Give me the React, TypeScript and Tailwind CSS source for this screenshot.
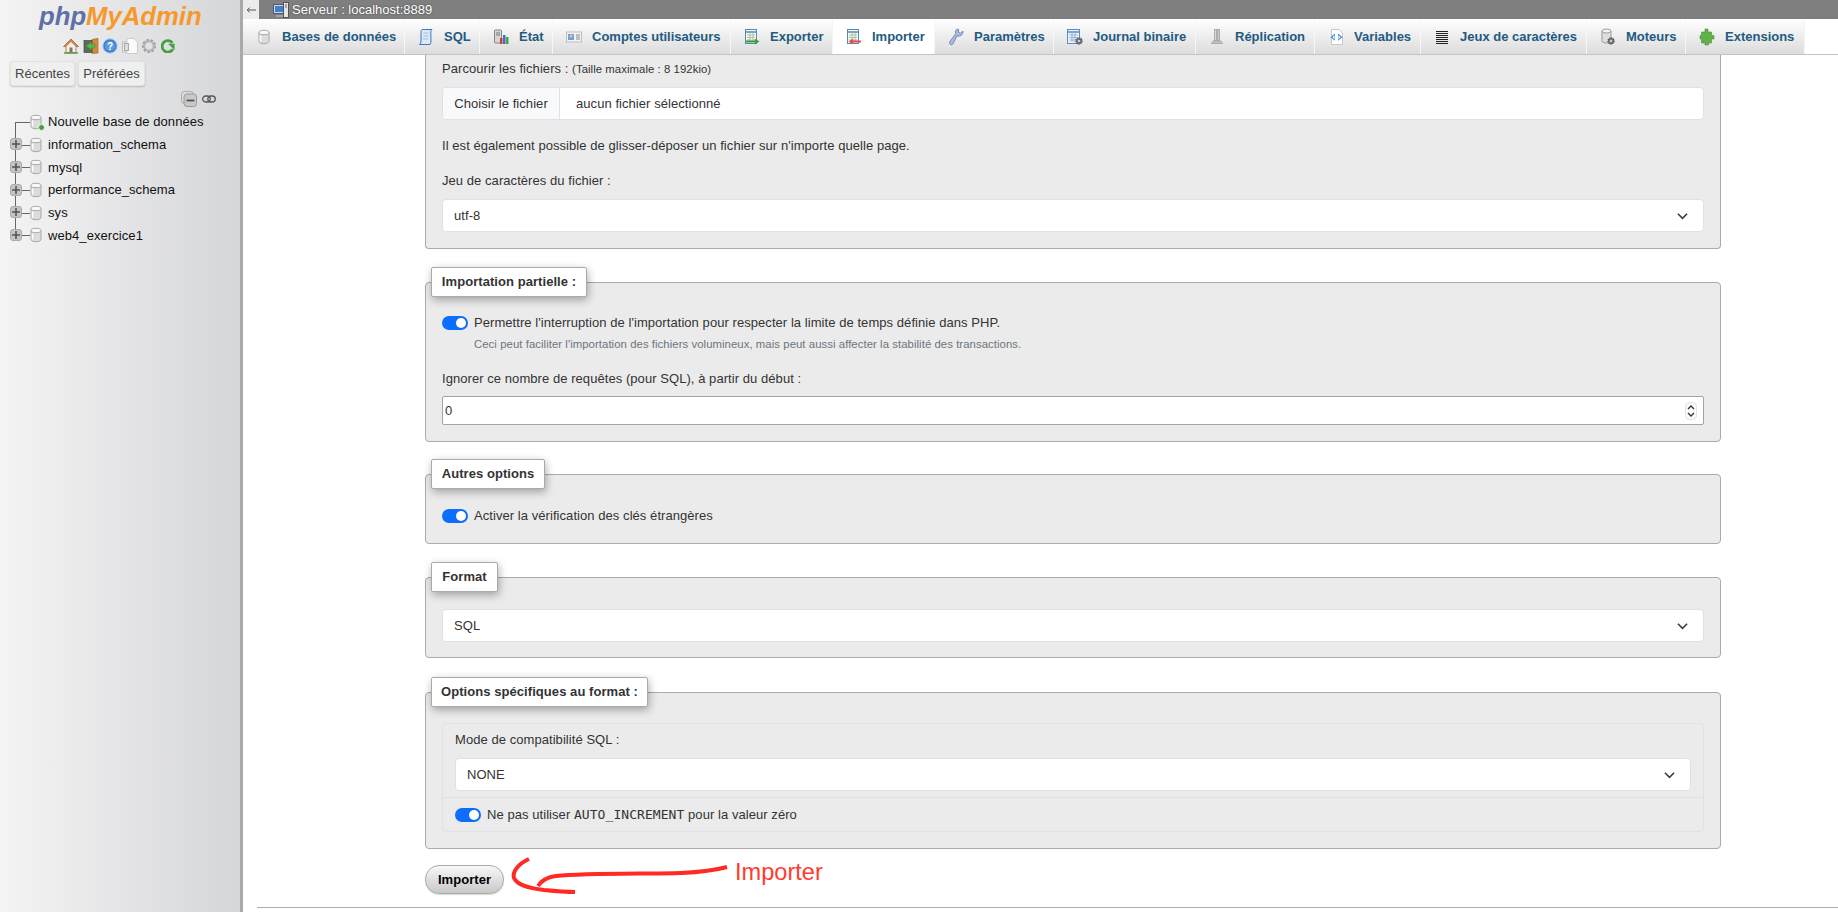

type IconProps = { className?: string };

const Db = ({ className = "w-4 h-4" }: IconProps) => (
  <svg viewBox="0 0 16 16" className={className}>
    <path d="M3 3.5v9c0 1.3 2.2 2.2 5 2.2s5-.9 5-2.2v-9z" fill="#dcdcdc" stroke="#a8a8a8" />
    <ellipse cx="8" cy="3.5" rx="5" ry="2.2" fill="#f8f8f8" stroke="#a8a8a8" />
    <path d="M4.5 6.5v6" stroke="#fff" strokeWidth="1.5" />
  </svg>
);

const SqlIcon = () => (
  <svg viewBox="0 0 16 18" className="w-4 h-[18px]">
    <path d="M4 1.5h10c-1.2 1-1.4 2-1.2 3.5l.2 8c.1 1.5-.2 2.5-1 3.5H1.5c1-.8 1.5-2 1.5-3.5L3 4c0-1.2.2-2 1-2.5z" fill="#dbe9f8" stroke="#3f77b8" />
    <path d="M5.5 5h5M5.5 8h5M5 11h5" stroke="#9dbfe4" />
  </svg>
);

const StatusIcon = () => (
  <svg viewBox="0 0 16 16" className="w-4 h-4">
    <rect x="1.5" y="1" width="7" height="13" rx="1" fill="#d5d5d5" stroke="#888" />
    <path d="M3 4h4M3 6h4" stroke="#777" />
    <rect x="7" y="9" width="2.5" height="6" fill="#d83a2e" />
    <rect x="10" y="6" width="2.5" height="9" fill="#3d70c9" />
    <rect x="13" y="8" width="2.5" height="7" fill="#4aa53c" />
  </svg>
);

const UsersIcon = () => (
  <svg viewBox="0 0 16 16" className="w-4 h-4">
    <rect x="0.5" y="3" width="15" height="10" fill="#f3f3f3" stroke="#bdbdbd" />
    <rect x="2" y="5" width="6" height="6" fill="#6aa4e0" />
    <circle cx="5" cy="7" r="1.6" fill="#eebf8d" />
    <path d="M10 6h4M10 8h4M10 10h4" stroke="#8a8a8a" />
  </svg>
);

const TableArrow = ({ color, stripe }: { color: string; stripe: string }) => (
  <svg viewBox="0 0 16 16" className="w-4 h-4">
    <rect x="1.5" y="0.5" width="11" height="14" fill="#f5f9f3" stroke="#5a86b8" />
    <path d="M1.5 3h11" stroke="#5a86b8" strokeWidth="1.5" />
    <path d="M3 6h8M3 8.5h8M3 11h8M6 4v9M9 4v9" stroke="#a9c4a0" />
    <path d={stripe} fill={color} />
  </svg>
);

const Wrench = () => (
  <svg viewBox="0 0 16 18" className="w-4 h-[18px]">
    <path d="M15 3.2l-2.6 2-2-1.2.3-2.7C9 .8 7.4 1.8 7.4 3.8c0 .8.2 1.3.4 1.8L2.2 13.2c-1 1.4-.7 2.7.2 3.3 1 .6 2 .2 2.8-1L8.8 8c2.7.6 6.6-.9 6.2-4.8z" fill="#a9bcd8" stroke="#5d78a6" strokeWidth="0.8" />
  </svg>
);

const LogIcon = () => (
  <svg viewBox="0 0 16 16" className="w-4 h-4">
    <rect x="0.5" y="0.5" width="12" height="14" fill="#e9f1fb" stroke="#5a8ccc" />
    <path d="M0.5 3h12" stroke="#5a8ccc" strokeWidth="1.5" />
    <path d="M2.5 6h8M2.5 8.5h8M2.5 11h8M5 4v9M8 4v9" stroke="#9cb4d0" />
    <circle cx="12" cy="12" r="3" fill="#777" stroke="#555" strokeWidth="1.4" strokeDasharray="1.2 0.8" />
    <circle cx="12" cy="12" r="1" fill="#eee" />
  </svg>
);

const ReplicationIcon = () => (
  <svg viewBox="0 0 16 16" className="w-4 h-4">
    <rect x="5.5" y="0.5" width="2" height="11" fill="#d8d8d8" stroke="#9a9a9a" strokeWidth="0.7" />
    <rect x="8.5" y="0.5" width="2" height="11" fill="#c8c8c8" stroke="#9a9a9a" strokeWidth="0.7" />
    <path d="M4 12h8l1.5 2.5h-11z" fill="#c4c4c4" stroke="#999" strokeWidth="0.7" />
  </svg>
);

const VariablesIcon = () => (
  <svg viewBox="0 0 16 16" className="w-4 h-4">
    <path d="M3.5.5h7.5l3.5 3.5v11.5h-11z" fill="#fff" stroke="#c8c8c8" />
    <path d="M7 4.5L2.5 8.2 7 11.8z" fill="#3b8de0" />
    <path d="M10 4.5l4.5 3.7-4.5 3.6z" fill="#3b8de0" />
    <path d="M6.5 6L4.6 8.2l1.9 2.2zM10.500 6l1.9 2.200-1.900 2.200z" fill="#fff" />
  </svg>
);

const CharsetIcon = () => (
  <svg viewBox="0 0 16 16" className="w-4 h-4">
    <path d="M2 2.500h12M2 4.500h12M2 6.500h12M2 8.500h12M2 10.500h12M2 12.500h12M2 14.500h12" stroke="#222" />
  </svg>
);

const EnginesIcon = () => (
  <svg viewBox="0 0 16 18" className="w-4 h-[18px]">
    <path d="M2 3v10c0 1.200 1.800 2 4.500 2s4.500-.8 4.500-2V3z" fill="#dedede" stroke="#9a9a9a" />
    <ellipse cx="6.500" cy="3" rx="4.500" ry="2" fill="#f6f6f6" stroke="#9a9a9a" />
    <circle cx="11" cy="13" r="3" fill="#777" stroke="#555" strokeWidth="1.4" strokeDasharray="1.200 0.800" />
    <circle cx="11" cy="13" r="1" fill="#eee" />
  </svg>
);

const PuzzleIcon = () => (
  <svg viewBox="0 0 16 18" className="w-4 h-[18px]">
    <path d="M6 1h3v3h3.500v3.500H15v3.500h-2.500V15H9.500v2H6v-2H2.500v-4H1V7.500h1.500V4H6z" fill="#62b04a" stroke="#4a913a" strokeWidth="0.6" />
  </svg>
);

const ServerIcon = () => (
  <svg viewBox="0 0 16 16" className="w-4 h-4">
    <rect x="0.500" y="2.500" width="11" height="9" fill="#cfd8e4" stroke="#4a5a70" />
    <rect x="2" y="4" width="8" height="6" fill="#3f7fcb" />
    <rect x="10.500" y="0.500" width="5" height="15" fill="#e6e6e6" stroke="#555" />
    <path d="M12 3h2M12 5h2" stroke="#666" />
    <path d="M3 13h7v2H3z" fill="#9aa4b0" />
  </svg>
);

const tabs = [
  { label: "Bases de données", width: "w-[162px]", icon: <Db /> },
  { label: "SQL", width: "w-[75px]", icon: <SqlIcon /> },
  { label: "État", width: "w-[73px]", icon: <StatusIcon /> },
  { label: "Comptes utilisateurs", width: "w-[178px]", icon: <UsersIcon /> },
  { label: "Exporter", width: "w-[102px]", icon: <TableArrow color="#3f9a3a" stripe="M2 11.500h9V9.800l4.500 2.700L11 15.200v-1.700H2z" /> },
  { label: "Importer", width: "w-[102px]", active: true, icon: <TableArrow color="#e8484a" stripe="M15 11.500H7V9.800l-4.500 2.700L7 15.200v-1.700h8z" /> },
  { label: "Paramètres", width: "w-[119px]", icon: <Wrench /> },
  { label: "Journal binaire", width: "w-[142px]", icon: <LogIcon /> },
  { label: "Réplication", width: "w-[119px]", icon: <ReplicationIcon /> },
  { label: "Variables", width: "w-[106px]", icon: <VariablesIcon /> },
  { label: "Jeux de caractères", width: "w-[166px]", icon: <CharsetIcon /> },
  { label: "Moteurs", width: "w-[99px]", icon: <EnginesIcon /> },
  { label: "Extensions", width: "w-[119px]", icon: <PuzzleIcon /> },
];

const databases = ["information_schema", "mysql", "performance_schema", "sys", "web4_exercice1"];

function TreeRow({ name, last }: { name: string; last: boolean }) {
  return (
    <div className="flex items-center h-[22.7px]">
      <div className="relative w-[30px] h-full shrink-0">
        <span className={`absolute left-[15px] top-0 w-px bg-[#666] ${last ? "h-1/2" : "h-full"}`} />
        <span className="absolute left-[22px] top-1/2 w-[8px] h-px bg-[#666]" />
        <span className="absolute left-[10px] top-[5px] w-[12px] h-[12px] rounded-[3px] bg-[#c4c4c4] border border-[#aaa] flex items-center justify-center text-[#444]">
          <svg viewBox="0 0 8 8" className="w-2 h-2">
            <path d="M4 0v8M0 4h8" stroke="#555" strokeWidth="1.6" />
          </svg>
        </span>
      </div>
      <Db className="w-4 h-4 shrink-0 -ml-[2px]" />
      <span className="ml-[4px] text-[13px] tracking-[0.07px] text-[#111]">{name}</span>
    </div>
  );
}

function Sidebar() {
  return (
    <aside className="w-[240px] shrink-0 h-full bg-gradient-to-r from-[#f4f4f4] to-[#d5d6d9]">
      <div className="h-[38px] pl-[39px] pt-[1px] text-[25.7px] leading-[30px] font-bold italic">
        <span className="text-[#5f6fa8]">php</span>
        <span className="text-[#f7982b]">MyAdmin</span>
      </div>
      <div className="flex items-center gap-[3.5px] pl-[63px] h-[16px]">
        <svg viewBox="0 0 16 16" className="w-4 h-4">
          <path d="M8 1L.5 8.500h2.500V15h10V8.500h2.500z" fill="#c98a52" stroke="#99602f" strokeWidth="0.7" />
          <path d="M3.500 8.500L8 4l4.500 4.500V14h-9z" fill="#f4f0e6" />
          <rect x="6.500" y="9.500" width="3" height="4.500" fill="#777" />
          <path d="M1 15h14" stroke="#5ea04a" strokeWidth="1.500" />
        </svg>
        <svg viewBox="0 0 16 16" className="w-4 h-4">
          <path d="M9 1.500l6-1V15l-6 .5z" fill="#d48a3e" stroke="#a5652a" strokeWidth="0.7" />
          <rect x="1" y="2.500" width="8" height="12" fill="#5d6a5a" stroke="#3f4a3d" strokeWidth="0.7" />
          <path d="M8.500 6v-2L3 8l5.500 4v-2H12V6z" fill="#5fb44a" stroke="#3f8a35" strokeWidth="0.5" />
        </svg>
        <svg viewBox="0 0 16 16" className="w-4 h-4">
          <circle cx="8" cy="8" r="7.200" fill="#3f80d0" stroke="#b5cce8" />
          <circle cx="8" cy="8" r="5" fill="#5c9ae0" />
          <text x="8" y="11.500" textAnchor="middle" fontSize="10" fontWeight="700" fill="#fff">?</text>
        </svg>
        <svg viewBox="0 0 16 16" className="w-4 h-4">
          <rect x="0.500" y="4" width="8" height="10" fill="#eee" stroke="#bbb" />
          <path d="M5 .500h7l3.500 3.500v11.500H5z" fill="#fafafa" stroke="#ccc" />
          <rect x="2.500" y="5.500" width="4" height="7" fill="#ddd" stroke="#aaa" />
        </svg>
        <svg viewBox="0 0 16 16" className="w-4 h-4">
          <circle cx="8" cy="8" r="5.500" fill="none" stroke="#9a9a9a" strokeWidth="3" strokeDasharray="2.300 1.500" />
          <circle cx="8" cy="8" r="4.800" fill="none" stroke="#b4b4b4" strokeWidth="2" />
        </svg>
        <svg viewBox="0 0 16 16" className="w-[14px] h-[14px]">
          <path d="M13 4.500A6.500 6.500 0 1 0 13.500 11.500" fill="none" stroke="#45a040" strokeWidth="3.200" />
          <path d="M8 5.500h7.500v7z" fill="#45a040" />
        </svg>
      </div>
      <div className="flex gap-[3px] pl-[10px] mt-[7px]">
        {["Récentes", "Préférées"].map((t) => (
          <button
            key={t}
            className={`h-[25px] rounded-[3px] bg-[#efefef] border border-[#e2e2e2] shadow-[0_1px_2px_rgba(0,0,0,0.18)] text-[13px] text-[#444] ${t === "Récentes" ? "w-[65px]" : "w-[67px]"}`}
          >
            {t}
          </button>
        ))}
      </div>
      <div className="flex items-center pl-[181px] gap-[5px] h-[16px] mt-[5px]">
        <svg viewBox="0 0 16 16" className="w-4 h-4">
          <rect x="0.500" y="0.500" width="12" height="12" rx="3" fill="#ddd" stroke="#aaa" />
          <rect x="3" y="3" width="12.500" height="12.500" rx="3" fill="#c8c8c8" stroke="#999" />
          <path d="M5.500 9.500h8" stroke="#555" strokeWidth="1.800" />
        </svg>
        <svg viewBox="0 0 14 8" className="w-[14px] h-2">
          <rect x="0.700" y="1" width="7.500" height="6" rx="3" fill="none" stroke="#555" strokeWidth="1.300" />
          <rect x="5.800" y="1" width="7.500" height="6" rx="3" fill="none" stroke="#555" strokeWidth="1.300" />
        </svg>
      </div>
      <div className="mt-[3px]">
        <div className="flex items-center h-[23.3px]">
          <div className="relative w-[30px] h-full shrink-0">
            <span className="absolute left-[15px] top-1/2 w-px h-1/2 bg-[#666]" />
            <span className="absolute left-[15px] top-1/2 w-[15px] h-px bg-[#666]" />
          </div>
          <div className="relative -ml-[2px] shrink-0">
            <Db className="w-4 h-4" />
            <span className="absolute -right-[1px] -bottom-[1px] w-[7px] h-[7px] rounded-full bg-[#4e9a3c] border border-[#dfe]" />
          </div>
          <span className="ml-[4px] text-[13px] tracking-[0.07px] text-[#111]">Nouvelle base de données</span>
        </div>
        {databases.map((d, i) => (
          <TreeRow key={d} name={d} last={i === databases.length - 1} />
        ))}
      </div>
    </aside>
  );
}

function Legend({ children, className }: { children: React.ReactNode; className: string }) {
  return (
    <div
      className={`-mt-[16px] -ml-[11px] h-[30px] flex items-center justify-center bg-white border border-[#aaa] rounded-[2px] shadow-[1px_3px_9px_rgba(0,0,0,0.32)] font-bold text-[13px] text-[#333] ${className}`}
    >
      {children}
    </div>
  );
}

const Chevron = () => (
  <svg viewBox="0 0 12 8" className="w-[11px] h-[8px]">
    <path d="M1 1.500l5 5 5-5" fill="none" stroke="#343a40" strokeWidth="1.700" />
  </svg>
);

function Select({ value, className }: { value: string; className?: string }) {
  return (
    <div className={`h-[33px] flex items-center justify-between bg-white border border-[#dee2e6] rounded-[4px] pl-[11px] pr-[15px] text-[13px] text-[#333] ${className}`}>
      <span>{value}</span>
      <Chevron />
    </div>
  );
}

function Toggle() {
  return (
    <span className="inline-flex items-center justify-end w-[26px] h-[14px] rounded-full bg-[#0d6efd] pr-[2px] shrink-0">
      <span className="w-[10px] h-[10px] rounded-full bg-white" />
    </span>
  );
}

export default function App() {
  return (
    <div className="relative flex w-[1838px] h-[912px] overflow-hidden bg-white font-['Liberation_Sans',Arial,sans-serif]">
      <Sidebar />
      <div className="w-[3px] shrink-0 bg-[#a9a9a9]" />
      <main className="flex-1 min-w-0">
        <div className="flex items-center h-[19px] bg-[#7f7f7f]">
          <div className="w-[16px] h-full bg-[#ececec] flex items-center justify-center">
            <svg viewBox="0 0 12 8" className="w-[10px] h-2">
              <path d="M12 4H2M4.500 1L1.500 4l3 3" fill="none" stroke="#555" strokeWidth="1.200" />
            </svg>
          </div>
          <span className="ml-[14px]">
            <ServerIcon />
          </span>
          <span className="ml-[3px] text-[13px] text-white [text-shadow:0_0_2px_rgba(0,0,0,0.5)]">Serveur : localhost:8889</span>
        </div>
        <nav className="flex h-[36px] border-b border-[#c4c4c4]">
          {tabs.map((t) => (
            <div
              key={t.label}
              className={`${t.width} shrink-0 flex items-center gap-[10px] pl-[13px] border-r border-[#f6f6f6] font-bold text-[13px] text-[#235a81] whitespace-nowrap ${t.active ? "bg-white" : "bg-gradient-to-b from-white to-[#dcdcdc]"}`}
            >
              <span className="w-4 flex justify-center shrink-0">{t.icon}</span>
              {t.label}
            </div>
          ))}
        </nav>

        <div className="pl-[182px] pr-[117px] tracking-[0.06px]">
          <section className="border border-t-0 border-[#aaa] rounded-b-[4px] bg-[#ebebeb] px-[16px] pt-[4px] pb-[16px] text-[13px] text-[#333] leading-[20px]">
            <div>
              Parcourir les fichiers : <span className="text-[11.35px]">(Taille maximale : 8 192kio)</span>
            </div>
            <div className="flex mt-[8px] h-[33px] bg-white border border-[#dee2e6] rounded-[4px] overflow-hidden">
              <div className="w-[117px] flex items-center justify-center bg-[#f8f9fa] border-r border-[#dee2e6]">Choisir le fichier</div>
              <div className="flex items-center pl-[16px]">aucun fichier sélectionné</div>
            </div>
            <div className="mt-[16px]">Il est également possible de glisser-déposer un fichier sur n'importe quelle page.</div>
            <div className="mt-[15px]">Jeu de caractères du fichier :</div>
            <Select value="utf-8" className="mt-[8px]" />
          </section>

          <section className="mt-[33px] border border-[#aaa] rounded-[4px] bg-[#ebebeb] px-[16px] pb-[16px] text-[13px] text-[#333] leading-[20px]">
            <Legend className="w-[156px]">Importation partielle :</Legend>
            <div className="flex items-center gap-[6px] mt-[16px]">
              <Toggle />
              Permettre l'interruption de l'importation pour respecter la limite de temps définie dans PHP.
            </div>
            <div className="mt-[1px] pl-[32px] text-[11.35px] text-[#6c757d]">
              Ceci peut faciliter l'importation des fichiers volumineux, mais peut aussi affecter la stabilité des transactions.
            </div>
            <div className="mt-[15px]">Ignorer ce nombre de requêtes (pour SQL), à partir du début :</div>
            <div className="mt-[7px] h-[29px] flex items-center justify-between bg-white border border-[#a3a3a3] rounded-[2px] pl-[2px] pr-[6px]">
              0
              <svg viewBox="0 0 12 18" className="w-[12px] h-[18px]">
                <rect x="0.500" y="0.500" width="11" height="17" rx="4" fill="#fafafa" stroke="#e2e2e2" />
                <path d="M3 7l3-3 3 3M3 11l3 3 3-3" fill="none" stroke="#333" strokeWidth="1.300" />
              </svg>
            </div>
          </section>

          <section className="mt-[32px] border border-[#aaa] rounded-[4px] bg-[#ebebeb] px-[16px] pb-[17px] text-[13px] text-[#333] leading-[20px]">
            <Legend className="w-[114px]">Autres options</Legend>
            <div className="flex items-center gap-[6px] mt-[17px]">
              <Toggle />
              Activer la vérification des clés étrangères
            </div>
          </section>

          <section className="mt-[33px] border border-[#aaa] rounded-[4px] bg-[#ebebeb] px-[16px] pb-[15px] text-[13px] text-[#333] leading-[20px]">
            <Legend className="w-[67px]">Format</Legend>
            <Select value="SQL" className="mt-[17px]" />
          </section>

          <section className="mt-[34px] border border-[#aaa] rounded-[4px] bg-[#ebebeb] px-[16px] pb-[16px] text-[13px] text-[#333] leading-[20px]">
            <Legend className="w-[217px]">Options spécifiques au format :</Legend>
            <div className="mt-[16px] border border-[#dee2e6] rounded-[4px]">
              <div className="px-[12px] pt-[6px] pb-[6px]">
                <div>Mode de compatibilité SQL :</div>
                <Select value="NONE" className="mt-[8px]" />
              </div>
              <div className="flex items-center gap-[6px] border-t border-[#dee2e6] px-[12px] h-[34px]">
                <Toggle />
                <span>
                  Ne pas utiliser <code className="font-['DejaVu_Sans_Mono',monospace] text-[13px]">AUTO_INCREMENT</code> pour la valeur zéro
                </span>
              </div>
            </div>
          </section>

          <button className="mt-[16px] w-[79px] h-[29px] rounded-[14px] border border-[#aaa] bg-gradient-to-b from-[#f8f8f8] to-[#c8c8c8] shadow-[0_1px_1px_rgba(0,0,0,0.15)] font-bold text-[13px] text-black">
            Importer
          </button>
        </div>
        <hr className="mt-[13px] ml-[14px] border-t border-[#aaa]" />
      </main>

      {/* red annotation drawn on top of the page */}
      <svg viewBox="0 0 320 50" className="absolute left-[500px] top-[852px] w-[320px] h-[50px] pointer-events-none">
        <path d="M29 7C18 12 12 20 14 26c3 7 14 10 30 12 10 1 20 2 31 2" fill="none" stroke="#ff2a23" strokeWidth="4" />
        <path d="M38 34c4-6 10-9 18-10 30-3 90-2 125-3 20-1 35-3 46-6" fill="none" stroke="#ff2a23" strokeWidth="4" />
      </svg>
      <span className="absolute left-[735px] top-[858px] text-[23.6px] leading-[28px] text-[#ff3b30]">Importer</span>
    </div>
  );
}
